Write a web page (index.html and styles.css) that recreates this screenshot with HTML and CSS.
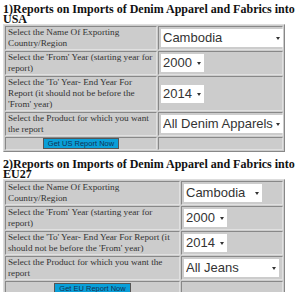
FILE: index.html
```html
<!DOCTYPE html>
<html lang="en">
<head>
<meta charset="UTF-8">
<meta name="viewport" content="width=device-width">
<title>Denim Import Reports</title>
<link rel="stylesheet" href="styles.css">
</head>
<body>
<h2 class="titre">1)Reports on Imports of Denim Apparel and Fabrics into USA</h2>
<table class="rapport us">
  <tr>
    <td class="libelle">Select the Name Of Exporting Country/Region</td>
    <td><span class="liste"><select class="choix pays"><option>Cambodia</option></select></span></td>
  </tr>
  <tr>
    <td class="libelle">Select the 'From' Year (starting year for report)</td>
    <td><span class="liste"><select class="choix annee"><option>2000</option></select></span></td>
  </tr>
  <tr>
    <td class="libelle">Select the 'To' Year- End Year For Report (it should not be before the 'From' year)</td>
    <td><span class="liste"><select class="choix annee"><option>2014</option></select></span></td>
  </tr>
  <tr>
    <td class="libelle">Select the Product for which you want the report</td>
    <td><span class="liste"><select class="choix produit"><option>All Denim Apparels</option></select></span></td>
  </tr>
  <tr class="ligne-bouton">
    <td class="bouton-cell"><button class="bouton">Get US Report Now</button></td>
    <td></td>
  </tr>
</table>

<h2 class="titre">2)Reports on Imports of Denim Apparel and Fabrics into EU27</h2>
<table class="rapport eu">
  <tr>
    <td class="libelle">Select the Name Of Exporting Country/Region</td>
    <td><span class="liste"><select class="choix pays"><option>Cambodia</option></select></span></td>
  </tr>
  <tr>
    <td class="libelle">Select the 'From' Year (starting year for report)</td>
    <td><span class="liste"><select class="choix annee"><option>2000</option></select></span></td>
  </tr>
  <tr>
    <td class="libelle">Select the 'To' Year- End Year For Report (it should not be before the 'From' year)</td>
    <td><span class="liste"><select class="choix annee"><option>2014</option></select></span></td>
  </tr>
  <tr>
    <td class="libelle">Select the Product for which you want the report</td>
    <td><span class="liste"><select class="choix produit"><option>All Jeans</option></select></span></td>
  </tr>
  <tr class="ligne-bouton">
    <td class="bouton-cell"><button class="bouton">Get EU Report Now</button></td>
    <td></td>
  </tr>
</table>
</body>
</html>
```
FILE: styles.css
```css
body {
  margin: 0;
  padding: 3px 3px 0 3px;
  background: #ffffff;
  font-family: "Liberation Serif", Georgia, serif;
  color: #333333;
}
.titre {
  font-size: 12px;
  line-height: 10px;
  font-weight: bold;
  color: #111111;
  margin: 1px 0 0 0;
}
.rapport {
  width: 282px;
  table-layout: fixed;
  background: #cccccc;
  border: 1px solid;
  border-color: #dddddd #888888 #888888 #dddddd;
  border-spacing: 1px;
  margin-bottom: 7px;
}
.rapport td {
  border: 1px solid;
  border-color: #888888 #e0e0e0 #e0e0e0 #888888;
  padding: 0 1px 0 2px;
  font-size: 9.2px;
  line-height: 11px;
  height: 21px;
  vertical-align: middle;
}
.us .libelle {
  width: 147px;
}
.eu .libelle {
  width: 170px;
}
.rapport .ligne-bouton td {
  height: 11px;
  padding: 0;
}
.liste {
  display: inline-block;
  position: relative;
  background: #ffffff;
  vertical-align: middle;
  line-height: 0;
}
.liste::after {
  content: "";
  position: absolute;
  right: 3px;
  top: 8px;
  border-left: 2px solid transparent;
  border-right: 2px solid transparent;
  border-top: 3px solid #333333;
}
.choix {
  -webkit-appearance: none;
  appearance: none;
  font-family: "Liberation Sans", Arial, sans-serif;
  font-size: 13px;
  height: 18px;
  line-height: 18px;
  border: 0;
  background: transparent;
  color: #333333;
  padding: 0 10px 0 2px;
}
.annee {
  width: 43px;
}
.us .pays {
  width: 122px;
}
.us .produit {
  width: 122px;
}
.eu .pays {
  width: 78px;
}
.eu .produit {
  width: 95px;
}
.bouton-cell {
  text-align: center;
}
.bouton {
  font-family: "Liberation Sans", Arial, sans-serif;
  font-size: 7.5px;
  line-height: 9px;
  color: #113355;
  background: #0a9fd8;
  border: 1px solid #555555;
  padding: 0 4px;
  vertical-align: middle;
}
```
